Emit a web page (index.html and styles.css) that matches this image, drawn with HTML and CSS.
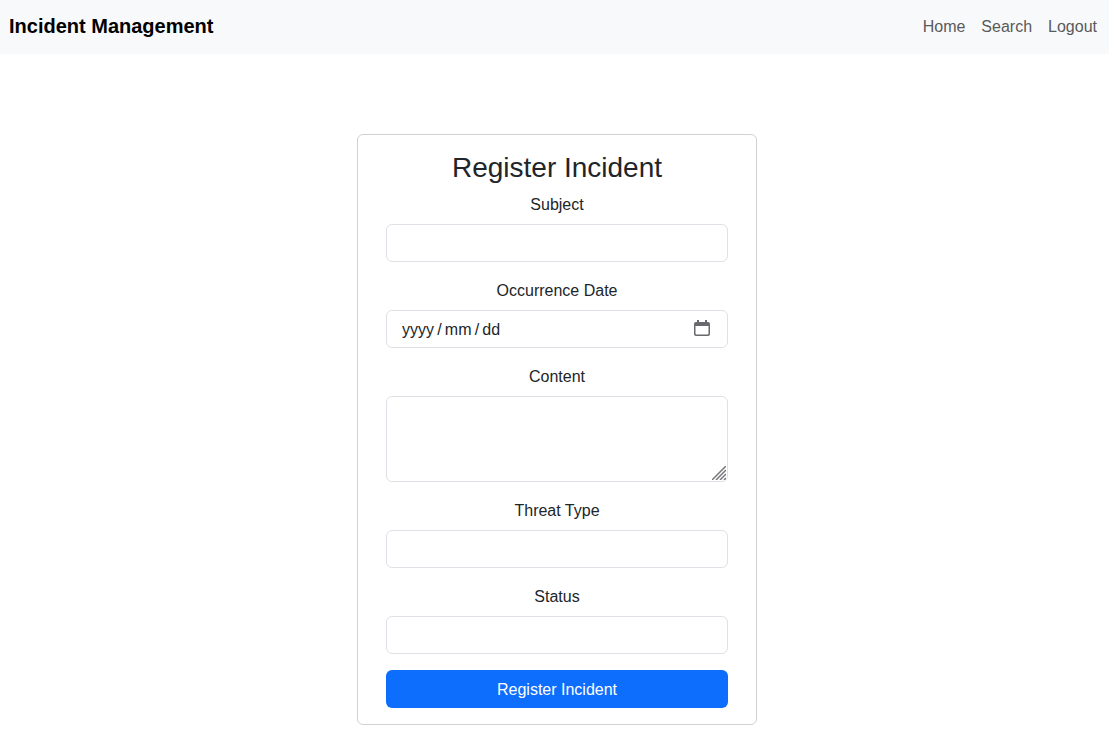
FILE: index.html
```html
<!DOCTYPE html>
<html lang="en">
<head>
<meta charset="utf-8">
<meta name="viewport" content="width=device-width, initial-scale=1">
<title>Incident Management</title>
<link rel="stylesheet" href="styles.css">
</head>
<body>
<header class="navbar">
  <a class="brand" href="#">Incident Management</a>
  <nav class="nav-links">
    <a class="nav-link" href="#">Home</a>
    <a class="nav-link" href="#">Search</a>
    <a class="nav-link" href="#">Logout</a>
  </nav>
</header>
<main class="page">
  <form class="card">
    <h1 class="card-title">Register Incident</h1>
    <div class="field">
      <label for="subject">Subject</label>
      <input class="control" id="subject" type="text">
    </div>
    <div class="field">
      <label for="date">Occurrence Date</label>
      <div class="control-wrap">
        <input class="control date" id="date" type="text" placeholder="yyyy&#8201;/&#8201;mm&#8201;/&#8201;dd">
        <button class="picker" type="button" aria-label="Choose date">
          <svg width="16" height="16" viewBox="0 0 16 16" fill="#69696d"><path fill-rule="evenodd" d="M3 0h2v2h6V0h2v2h1a2 2 0 0 1 2 2v10a2 2 0 0 1-2 2H2a2 2 0 0 1-2-2V4a2 2 0 0 1 2-2h1zM1.5 6v7.5a1 1 0 0 0 1 1h11a1 1 0 0 0 1-1V6z"/></svg>
        </button>
      </div>
    </div>
    <div class="field">
      <label for="content">Content</label>
      <div class="control-wrap">
        <textarea class="control area" id="content" rows="3"></textarea>
        <svg class="grip" width="14" height="14" viewBox="0 0 14 14" fill="none" stroke="#77777b" stroke-width="1.5"><path d="M0 14 14 0M4 14 14 4M8 14l6-6M12 14l2-2"/></svg>
      </div>
    </div>
    <div class="field">
      <label for="threat">Threat Type</label>
      <input class="control" id="threat" type="text">
    </div>
    <div class="field">
      <label for="status">Status</label>
      <input class="control" id="status" type="text">
    </div>
    <button class="submit" type="submit">Register Incident</button>
  </form>
</main>
</body>
</html>
```

FILE: styles.css
```css
* {
  box-sizing: border-box;
}

body {
  margin: 0;
  font: 16px/26px "Liberation Sans", Arial, sans-serif;
  color: #212529;
  background: #fff;
}

.navbar {
  display: flex;
  align-items: flex-end;
  justify-content: space-between;
  padding: 11px 12px 13px 9px;
  background: #f8f9fa;
}

.brand {
  font-size: 20px;
  line-height: 30px;
  font-weight: 700;
  color: #000;
  text-decoration: none;
}

.nav-links {
  display: flex;
  gap: 16px;
  line-height: 28px;
}

.nav-link {
  color: #595a5b;
  text-decoration: none;
}

.page {
  display: flex;
  justify-content: center;
  padding: 80px 0 11px 5px;
}

.card {
  display: flex;
  flex-direction: column;
  gap: 16px;
  width: 400px;
  max-width: 100%;
  padding: 15px 28px 16px;
  border: 1px solid #d0d1d2;
  border-radius: 6px;
}

.card-title {
  margin: 0 0 -10px;
  font-size: 28px;
  line-height: 36px;
  font-weight: 400;
  text-align: center;
}

.field {
  display: flex;
  flex-direction: column;
  gap: 6px;
  text-align: center;
}

.control-wrap {
  position: relative;
  display: flex;
}

.control {
  display: block;
  width: 100%;
  height: 38px;
  padding: 7px 12px 5px;
  border: 1px solid #dee2e6;
  border-radius: 6px;
  font: inherit;
  line-height: 24px;
  color: #212529;
  background: #fff;
}

.date {
  padding-right: 48px;
  padding-left: 15px;
}

.date::placeholder {
  color: #212529;
  opacity: 1;
}

.picker {
  position: absolute;
  top: 10px;
  right: 18px;
  display: flex;
  padding: 0;
  border: 0;
  background: none;
}

.area {
  height: 86px;
  resize: vertical;
}

.area::-webkit-resizer {
  background: transparent;
}

.grip {
  position: absolute;
  right: 2px;
  bottom: 2px;
  pointer-events: none;
}

.submit {
  height: 38px;
  padding: 8px 12px 6px;
  border: 0;
  border-radius: 6px;
  font: inherit;
  line-height: 24px;
  color: #fff;
  background: #0d6efd;
}
```
